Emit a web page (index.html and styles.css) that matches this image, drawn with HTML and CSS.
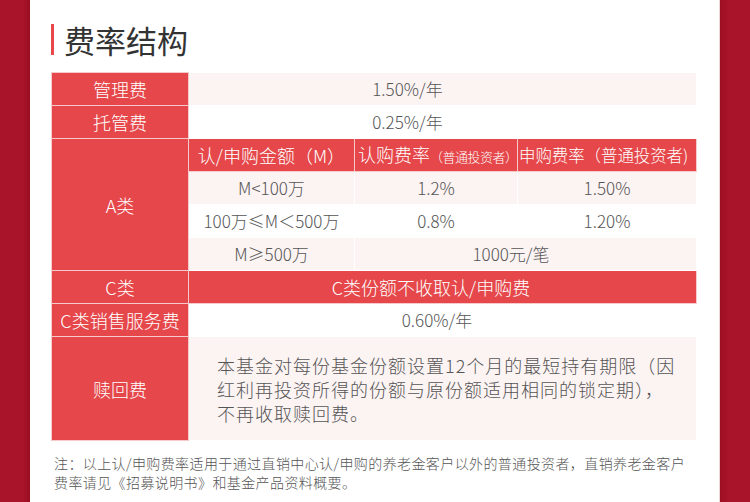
FILE: index.html
```html
<!DOCTYPE html>
<html lang="zh-CN">
<head>
<meta charset="utf-8">
<title>费率结构</title>
<link rel="stylesheet" href="styles.css">
</head>
<body>
<div class="page">
  <div class="strip strip-left"></div>
  <main class="main">
    <h1 class="title"><span class="title-bar"></span>费率结构</h1>
    <table class="fees">
      <colgroup>
        <col class="c0"><col class="c1"><col class="c2"><col class="c3">
      </colgroup>
      <tr class="pink">
        <td class="label">管理费</td>
        <td colspan="3" class="val shift-l">1.50%/年</td>
      </tr>
      <tr>
        <td class="label">托管费</td>
        <td colspan="3" class="val shift-l">0.25%/年</td>
      </tr>
      <tr>
        <td class="label" rowspan="4">A类</td>
        <td class="head">认/申购金额（M）</td>
        <td class="head h2">认购费率<small>（普通投资者）</small></td>
        <td class="head h3">申购费率（普通投资者)</td>
      </tr>
      <tr class="pink">
        <td class="val">M&lt;100万</td>
        <td class="val">1.2%</td>
        <td class="val">1.50%</td>
      </tr>
      <tr>
        <td class="val">100万≤M＜500万</td>
        <td class="val">0.8%</td>
        <td class="val">1.20%</td>
      </tr>
      <tr class="pink">
        <td class="val">M≥500万</td>
        <td colspan="2" class="val shift-s">1000元/笔</td>
      </tr>
      <tr>
        <td class="label">C类</td>
        <td colspan="3" class="head wide">C类份额不收取认/申购费</td>
      </tr>
      <tr>
        <td class="label">C类销售服务费</td>
        <td colspan="3" class="val shift-c">0.60%/年</td>
      </tr>
      <tr class="pink tall">
        <td class="label">赎回费</td>
        <td colspan="3" class="para">本基金对每份基金份额设置12个月的最短持有期限（因<br>红利再投资所得的份额与原份额适用相同的锁定期），<br>不再收取赎回费。</td>
      </tr>
    </table>
    <p class="note">注：以上认/申购费率适用于通过直销中心认/申购的养老金客户以外的普通投资者，直销养老金客户<br>费率请见《招募说明书》和基金产品资料概要。</p>
  </main>
  <div class="strip strip-right"></div>
</div>
</body>
</html>
```
FILE: styles.css
```css
* { box-sizing: border-box; }
html, body {
  margin: 0;
  padding: 0;
  background: #fff;
}
body {
  font-family: "Noto Sans CJK SC", "Noto Sans", sans-serif;
  color: #555;
}
.page {
  display: flex;
  width: 750px;
  height: 502px;
  overflow: hidden;
}
.strip {
  flex: 0 0 auto;
  height: 100%;
}
.strip-left {
  width: 30px;
  background: linear-gradient(to right, #a9142a 0%, #a9142a 75%, #9a0e22 100%);
}
.strip-right {
  width: 31px;
  border-left: 1px solid #eed3d7;
  background: linear-gradient(to right, #9e0f23 0%, #a9142a 30%, #a9142a 100%);
}
.main {
  flex: 1 1 auto;
  padding-left: 21px;
  padding-top: 24px;
}
.title {
  display: flex;
  align-items: center;
  height: 31px;
  margin: 0;
  font-size: 31px;
  font-weight: 400;
  color: #333;
  line-height: 31px;
}
.title-bar {
  width: 3px;
  height: 31px;
  background: #e8474b;
  margin-right: 10px;
}
.fees {
  margin-top: 17px;
  width: 645px;
  border-collapse: collapse;
  table-layout: fixed;
  font-weight: 300;
}
.c0 { width: 137px; }
.c1 { width: 166px; }
.c2 { width: 163px; }
.c3 { width: 179px; }
.fees td {
  border: 1px solid #fff;
  height: 33px;
  padding: 0;
  text-align: center;
  vertical-align: middle;
  white-space: nowrap;
  overflow: visible;
  line-height: 20px;
}
.fees tr.pink td { background: #fcf3f3; }
.fees td.label,
.fees td.head {
  background: #e5474a;
  color: #fff;
  font-size: 18px;
  border-color: #f6caca;
}
.fees tr.pink td.label { background: #e5474a; }
.fees td.h2 { text-align: left; padding-left: 3px; }
.fees td.h2 small { font-size: 13px; letter-spacing: -0.5px; }
.fees td.h3 { font-size: 16.5px; text-align: left; padding-left: 1px; letter-spacing: -0.1px; }
.fees td.wide { padding-right: 23px; }
.fees td.val { font-size: 17px; }
.fees td.shift-l { padding-right: 70px; }
.fees td.shift-s { padding-right: 29px; }
.fees td.shift-c { padding-right: 11px; }
.fees tr.tall td { height: 104px; }
.fees td.para {
  text-align: left;
  padding-left: 28px;
  font-size: 18px;
  letter-spacing: 1px;
  line-height: 24px;
  white-space: normal;
  color: #555;
}
.note {
  margin: 13px 0 0 3px;
  font-size: 14px;
  line-height: 19px;
  letter-spacing: 0.4px;
  color: #555;
  white-space: nowrap;
  font-weight: 300;
}
```
